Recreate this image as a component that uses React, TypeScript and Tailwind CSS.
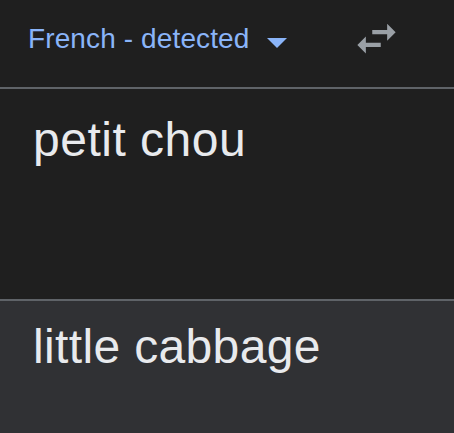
const SwapIcon = () => (
  <svg className="w-[51px] h-[51px] shrink-0" viewBox="0 0 24 24" fill="#9aa0a6">
    <path d="M6.99 11L3 15l3.99 4v-3H14v-2H6.99v-3zM21 9l-3.99-4v3H10v2h7.01v3L21 9z" />
  </svg>
);

const App = () => {
  return (
    <div className="w-[454px] h-[433px] flex flex-col bg-[#1f1f1f] overflow-hidden font-['Liberation_Sans',Arial,sans-serif]">
      <header className="h-[87px] flex items-start pl-[28px] shrink-0">
        <span className="mt-[25px] text-[28px] leading-[28px] tracking-[0.12px] text-[#8ab4f8] whitespace-nowrap">
          French - detected
        </span>
        <svg className="mt-[38px] ml-[17px] w-[20px] h-[10px] shrink-0" viewBox="0 0 20 10" fill="#8ab4f8">
          <polygon points="0,0 20,0 10,10" />
        </svg>
        <div className="mt-[13px] ml-[64px]">
          <SwapIcon />
        </div>
      </header>

      <section className="h-[212px] border-t-2 border-[#5f6368] pl-[33px] shrink-0">
        <p className="mt-[27px] text-[48px] leading-[48px] tracking-[0.5px] text-[#e8eaed]">petit chou</p>
      </section>

      <section className="flex-1 border-t-2 border-[#5f6368] bg-[#303134] pl-[33px]">
        <p className="mt-[22px] text-[48px] leading-[48px] tracking-[0.35px] text-[#e8eaed]">little cabbage</p>
      </section>
    </div>
  );
};

export default App;
